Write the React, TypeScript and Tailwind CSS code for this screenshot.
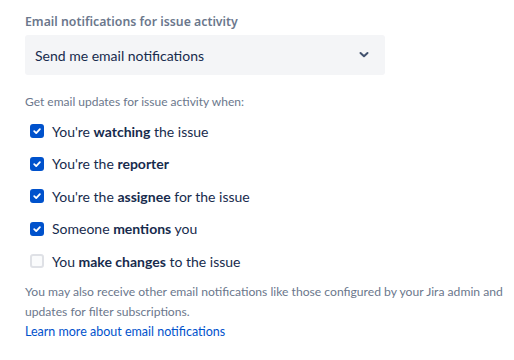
import React from "react";

const Check = ({ checked }: { checked: boolean }) =>
  checked ? (
    <span className="flex h-[14px] w-[14px] shrink-0 items-center justify-center rounded-[3px] bg-[#0052cc]">
      <svg width="10" height="10" viewBox="0 0 10 10">
        <path d="M2.2 5.2 L4.2 7.1 L7.9 3.1" fill="none" stroke="#fff" strokeWidth="1.8" strokeLinecap="round" strokeLinejoin="round" />
      </svg>
    </span>
  ) : (
    <span className="block h-[14px] w-[14px] shrink-0 rounded-[3px] border-2 border-[#dfe1e6] bg-[#fafbfc]" />
  );

const Row = ({ checked, children }: { checked: boolean; children: React.ReactNode }) => (
  <div className="flex h-[32.5px] items-center gap-[8px] pl-[5px]">
    <Check checked={checked} />
    <span className="text-[14px] text-[#172b4d]">{children}</span>
  </div>
);

export default function App() {
  return (
    <div className="h-[360px] w-[514px] bg-white pl-[25px] pt-[13px]" style={{ fontFamily: 'Lato, sans-serif' }}>
      <div className="text-[12.3px] font-semibold leading-[18px] text-[#6b778c]" style={{ fontFamily: '"Noto Sans", sans-serif' }}>
        Email notifications for issue activity
      </div>
      <div className="mt-[4px] flex h-[40px] w-[360px] items-center justify-between rounded-[3px] bg-[#f4f5f7] pl-[10px] pr-[16px]">
        <span className="text-[14px] text-[#172b4d]">Send me email notifications</span>
        <svg width="10" height="8" viewBox="0 0 10 8">
          <path d="M1.5 2 L5 5.3 L8.5 2" fill="none" stroke="#42526e" strokeWidth="2" strokeLinecap="round" strokeLinejoin="round" />
        </svg>
      </div>
      <div className="mt-[18px] text-[12px] leading-[18px] text-[#6b778c]">Get email updates for issue activity when:</div>
      <div className="mt-[4px]">
        <Row checked>You're <b className="font-bold">watching</b> the issue</Row>
        <Row checked>You're the <b className="font-bold">reporter</b></Row>
        <Row checked>You're the <b className="font-bold">assignee</b> for the issue</Row>
        <Row checked>Someone <b className="font-bold">mentions</b> you</Row>
        <Row checked={false}>You <b className="font-bold">make changes</b> to the issue</Row>
      </div>
      <div className="mt-[4px] w-[484px] text-[12.15px] leading-[20px] text-[#6b778c]">
        You may also receive other email notifications like those configured by your Jira admin and updates for filter subscriptions.
      </div>
      <a className="block text-[12.5px] leading-[20px] text-[#0052cc]">Learn more about email notifications</a>
    </div>
  );
}
